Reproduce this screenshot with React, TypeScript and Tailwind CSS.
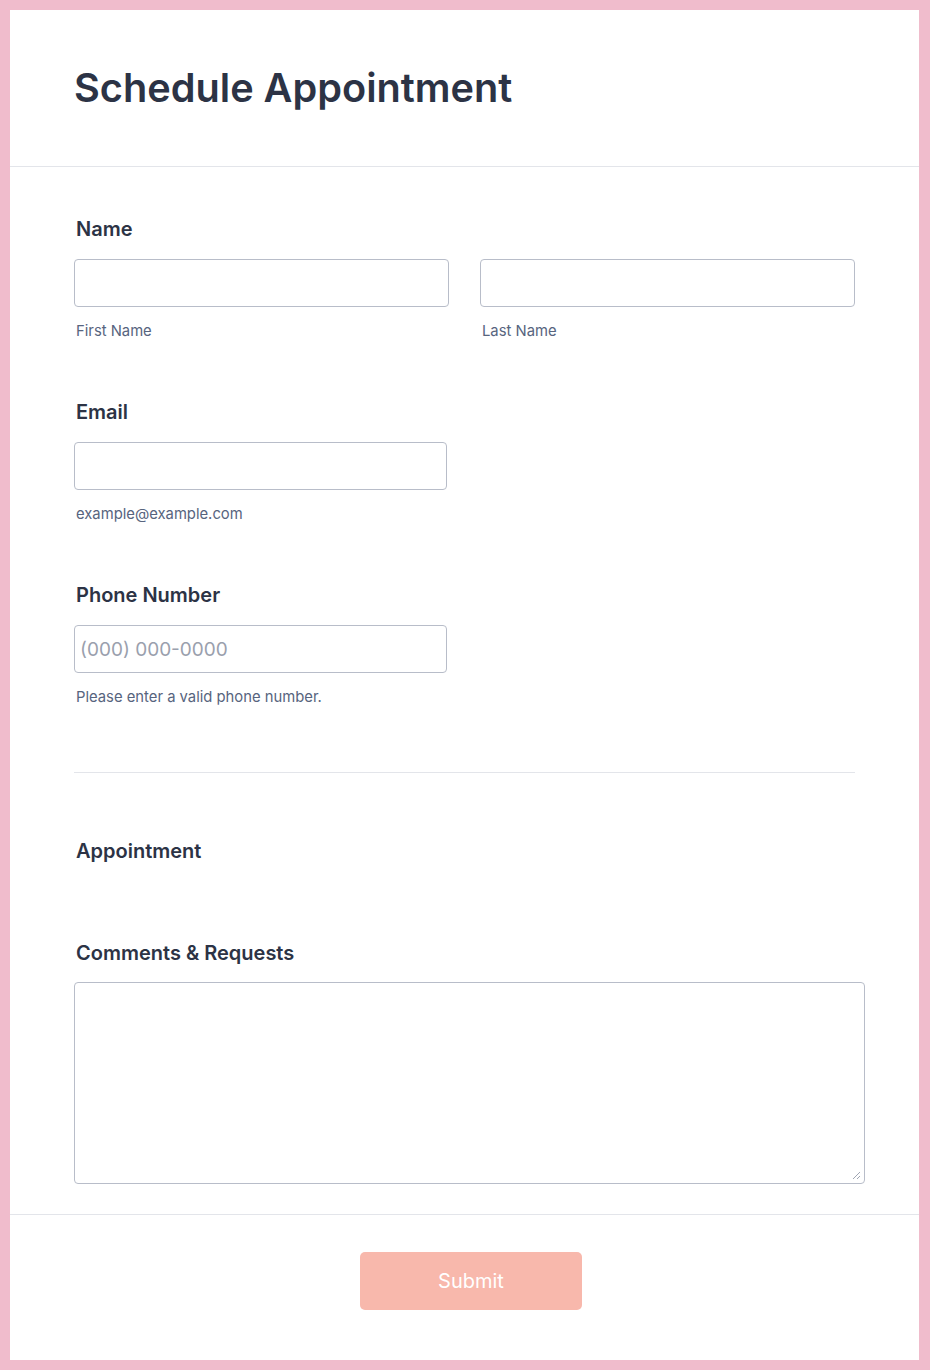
import React from "react";

const font = { fontFamily: "Inter, 'Noto Sans', sans-serif" };

function Label({ children, mt }: { children: React.ReactNode; mt: string }) {
  return (
    <div className={`${mt} h-[24px] text-[20px] leading-[24px] font-semibold text-[#2c3345] pl-[2px]`}>
      {children}
    </div>
  );
}

function Sub({ children }: { children: React.ReactNode }) {
  return <div className="mt-[15px] h-[18px] text-[14.8px] leading-[18px] text-[#57647e] pl-[2px]">{children}</div>;
}

export default function App() {
  return (
    <div style={font} className="w-[930px] h-[1370px] bg-[#f0bccc] pt-[10px] pl-[10px] pr-[11px] pb-[10px]">
      <div className="w-[909px] h-[1350px] bg-white flex flex-col">
        <div className="h-[157px] border-b border-[#e3e5ea] flex items-center pl-[64px]">
          <h1 className="text-[39.7px] leading-[48px] font-semibold text-[#2c3345]">Schedule Appointment</h1>
        </div>
        <div className="pl-[64px] pr-[54px] pb-[30px] border-b border-[#e3e5ea]">
          <Label mt="mt-[50px]">Name</Label>
          <div className="mt-[18px] flex gap-[31px] w-[781px]">
            <div className="flex-1">
              <div className="h-[48px] border border-[#b8bdc9] rounded-[4px]" />
              <Sub>First Name</Sub>
            </div>
            <div className="flex-1">
              <div className="h-[48px] border border-[#b8bdc9] rounded-[4px]" />
              <Sub>Last Name</Sub>
            </div>
          </div>
          <Label mt="mt-[60px]">Email</Label>
          <div className="mt-[18px] w-[373px] h-[48px] border border-[#b8bdc9] rounded-[4px]" />
          <Sub>example@example.com</Sub>
          <Label mt="mt-[60px]">Phone Number</Label>
          <div className="mt-[18px] w-[373px] h-[48px] border border-[#b8bdc9] rounded-[4px] flex items-center pl-[5px] pt-[3px] text-[19px] font-normal text-[#9aa0ad]">
            (000) 000-0000
          </div>
          <Sub>Please enter a valid phone number.</Sub>
          <div className="mt-[66px] w-[781px] h-px bg-[#e3e5ea]" />
          <Label mt="mt-[66px]">Appointment</Label>
          <Label mt="mt-[78px]">Comments &amp; Requests</Label>
          <div className="mt-[17px] w-[791px] h-[202px] border border-[#b8bdc9] rounded-[4px] relative">
            <svg className="absolute right-[3px] bottom-[3px]" width="9" height="9" viewBox="0 0 9 9">
              <line x1="1" y1="8" x2="8" y2="1" stroke="#a0a6b3" strokeWidth="1" />
              <line x1="5" y1="8" x2="8" y2="5" stroke="#a0a6b3" strokeWidth="1" />
            </svg>
          </div>
        </div>
        <div className="flex justify-center pt-[37px] pl-[13px]">
          <button className="w-[222px] h-[58px] rounded-[5px] bg-[#f8b8ac] text-white text-[20px]">Submit</button>
        </div>
      </div>
    </div>
  );
}
